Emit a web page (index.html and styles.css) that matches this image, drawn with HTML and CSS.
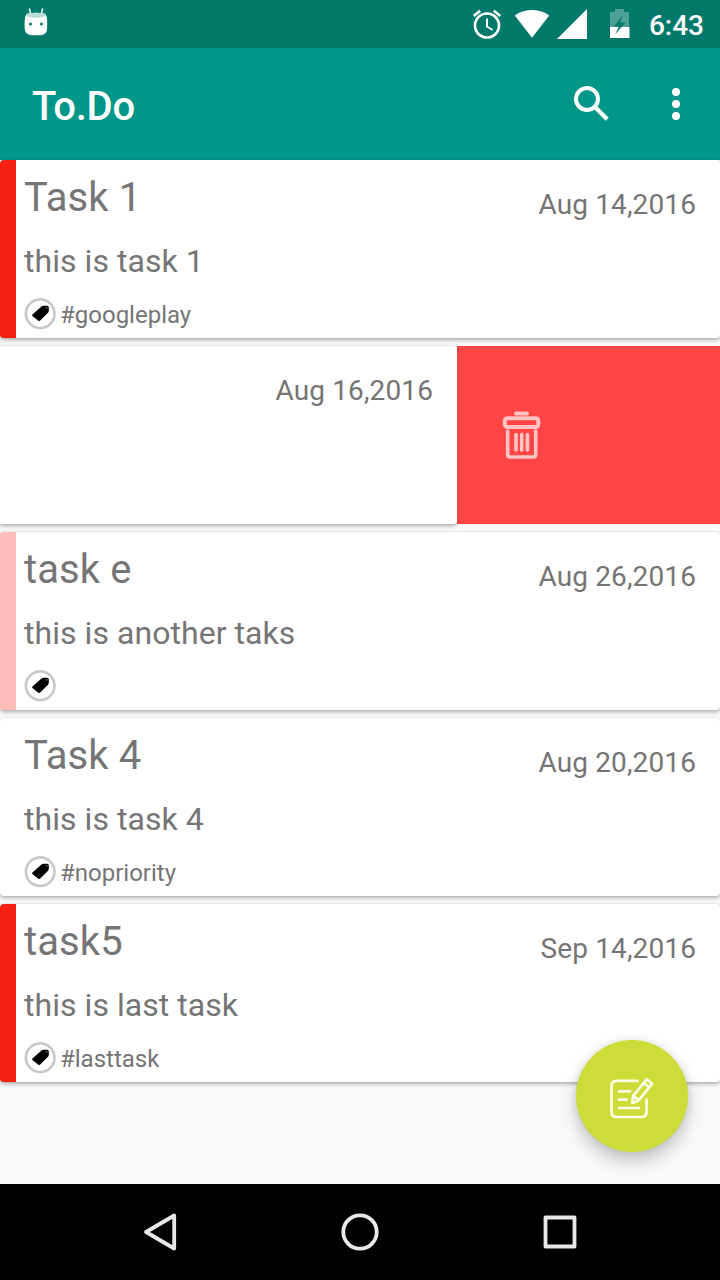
FILE: index.html
```html
<!DOCTYPE html>
<html lang="en">
<head>
<meta charset="utf-8">
<title>To.Do</title>
<link rel="stylesheet" href="styles.css">
</head>
<body>
<svg class="defs" width="0" height="0">
  <symbol id="tag" viewBox="0 0 32 32">
    <circle cx="16.200" cy="15.700" r="14.300" fill="#fff" stroke="#c8c8c8" stroke-width="2.600"/>
    <path class="tag-shape" d="M8.700 16.200 17.200 8.700Q18.200 7.700 19.500 7.700L23.300 7.700Q24.800 7.700 24.800 9.200L24.800 12.500Q24.800 14 23.800 15L16.500 22.300Q15.200 23.600 14 22.500L8.700 18.300Q7.600 17.300 8.700 16.200Z" fill="#000"/>
    <circle cx="22.800" cy="9.800" r=".9" fill="#666"/>
  </symbol>
</svg>
<div class="screen">
  <header class="status">
    <svg class="droid" width="24" height="30" viewBox="0 0 24 30">
      <path d="M5.500 1 6.700 6M18.500 1 17.300 6" stroke="#fff" stroke-width="1.400" stroke-linecap="round"/>
      <path d="M.6 17C.6 8 1.500 6 5 5.300Q12 4.300 19 5.300C22.500 6 23.200 8 23.200 17C23.200 25.500 22 27.300 12 27.300S.6 25.500 .6 17Z" fill="#fff"/>
      <path d="M2 7Q3 4.800 12 4.800T22 7Q21 9.800 12 9.800T2 7Z" fill="#b9dcd7"/>
      <circle cx="6.500" cy="16" r="1.500" fill="#00796b"/><circle cx="17.500" cy="16" r="1.500" fill="#00796b"/>
    </svg>
    <div class="indicators">
      <svg width="30" height="32" viewBox="0 0 30 32" fill="none" stroke="#fff">
        <circle cx="15" cy="17.500" r="12" stroke-width="2.600"/>
        <path d="M15 10.500V18.500L20.600 22" stroke-width="2"/>
        <path d="M1.700 8 8.200 2.800M28.300 8 21.800 2.800" stroke-width="2.600"/>
      </svg>
      <svg class="wifi" width="36" height="30" viewBox="0 0 36 30"><path d="M.8 7.500Q8 2 18 2T35.200 7.500L18 29.800Z" fill="#fff"/></svg>
      <svg class="signal" width="30" height="30" viewBox="0 0 30 30"><path d="M0 30H30V0Z" fill="#fff"/></svg>
      <svg class="battery" width="20" height="30" viewBox="0 0 20 30">
        <path d="M5 1H14V4H19V19H0V4H5Z" fill="#4da197"/>
        <path d="M0 19H19.500V30H0Z" fill="#fff"/>
        <path d="M12.500 7.500 4 18.500H9L5 26.500 15.500 14.500H10.200Z" fill="#00796b"/>
      </svg>
      <span class="clock">6:43</span>
    </div>
  </header>
  <div class="appbar">
    <h1 class="brand">To.Do</h1>
    <svg class="search" width="36" height="36" viewBox="0 0 36 36" fill="none" stroke="#fff"><circle cx="13" cy="13" r="11" stroke-width="4"/><path d="M22 22 33.200 33.200" stroke-width="4.200"/></svg>
    <svg class="more" width="8" height="32" viewBox="0 0 8 32" fill="#fff"><circle cx="4" cy="4" r="4"/><circle cx="4" cy="16" r="4"/><circle cx="4" cy="28" r="4"/></svg>
  </div>
  <main class="list">
    <article class="card high">
      <div class="body"><h2 class="title">Task 1</h2><p class="desc">this is task 1</p>
        <div class="tags"><svg width="32" height="32"><use href="#tag"/></svg><span>#googleplay</span></div></div>
      <time class="date">Aug 14,2016</time>
    </article>
    <div class="swipe">
      <article class="card swiped"><time class="date">Aug 16,2016</time></article>
      <div class="delete">
        <svg width="40" height="50" viewBox="0 0 40 50" fill="none" stroke="#ffc4c4" stroke-linecap="round" stroke-linejoin="round">
          <path d="M14 3.500H25" stroke-width="4"/>
          <rect x="2.800" y="8.200" width="33.500" height="8.800" rx="2.500" stroke-width="4"/>
          <path d="M5.700 21V44.500Q5.700 47 8.400 47H31Q33.700 47 33.700 44.500V21" stroke-width="3.600"/>
          <path d="M14 24.500V40M19.700 24.500V40M25.400 24.500V40" stroke-width="3.600"/>
        </svg>
      </div>
    </div>
    <article class="card low">
      <div class="body"><h2 class="title">task e</h2><p class="desc">this is another taks</p>
        <div class="tags"><svg width="32" height="32"><use href="#tag"/></svg></div></div>
      <time class="date">Aug 26,2016</time>
    </article>
    <article class="card">
      <div class="body"><h2 class="title">Task 4</h2><p class="desc">this is task 4</p>
        <div class="tags"><svg width="32" height="32"><use href="#tag"/></svg><span>#nopriority</span></div></div>
      <time class="date">Aug 20,2016</time>
    </article>
    <article class="card high">
      <div class="body"><h2 class="title">task5</h2><p class="desc">this is last task</p>
        <div class="tags"><svg width="32" height="32"><use href="#tag"/></svg><span>#lasttask</span></div></div>
      <time class="date">Sep 14,2016</time>
    </article>
    <button class="fab" aria-label="New task">
      <svg width="48" height="48" viewBox="0 0 48 48" fill="none" stroke="#fafce6" stroke-width="2.700" stroke-linecap="round" stroke-linejoin="round">
        <path d="M29.500 6.800H8.500Q3.500 6.800 3.500 12V38Q3.500 43 8.500 43H33.500Q38.500 43 38.500 38V25.500"/>
        <path d="M11 17.400H22M11 25.700H18.500M11 34H31"/>
        <path d="M24.200 29 25.200 21.800 38.700 5.300 44.200 9.700 30.700 26.400ZM25.200 21.800 30.700 26.400M35.700 9 41.200 13.400"/>
      </svg>
    </button>
  </main>
  <nav class="navbar">
    <svg width="36" height="40" viewBox="0 0 36 40"><path d="M4 20 32.200 3.500V36.500Z"/></svg>
    <svg width="40" height="40" viewBox="0 0 40 40"><circle cx="20" cy="20" r="16.700"/></svg>
    <svg width="36" height="40" viewBox="0 0 36 40"><rect x="3.500" y="5.500" width="29" height="29"/></svg>
  </nav>
</div>
</body>
</html>
```
FILE: styles.css
```css
* { box-sizing: border-box; }
body { margin: 0; font-family: Roboto, sans-serif; background: #fafafa; }
h1, h2, p { margin: 0; font-weight: 400; }
svg { display: block; flex: none; }
.defs { position: absolute; }
.tag-shape { filter: blur(.5px); }

.screen { width: 720px; height: 1280px; display: flex; flex-direction: column; overflow: hidden; }

.status { height: 48px; background: #00796b; display: flex; justify-content: space-between; align-items: flex-start; padding: 8px 16px 0 24px; color: #fff; }
.indicators { display: flex; align-items: flex-start; }
.wifi { margin-left: 12px; }
.signal { margin: 1px 0 0 7px; }
.battery { margin-left: 23px; }
.clock { font-size: 28px; line-height: 33px; font-weight: 500; margin-left: 19px; padding-top: 1px; }

.appbar { height: 112px; background: #009688; display: flex; align-items: center; padding: 0 40px 0 32px; color: #fff; }
.brand { flex: 1; font-size: 40px; line-height: 48px; font-weight: 500; padding-top: 6px; letter-spacing: -.3px; }
.more { margin-left: 62px; }

.list { flex: 1; position: relative; display: flex; flex-direction: column; gap: 8px; }
.card { height: 178px; display: flex; justify-content: space-between; background: #fff; border-left: 16px solid #fff; border-radius: 4px; padding: 0 24px 0 8px; color: #757575; box-shadow: 0 2px 4px rgba(0, 0, 0, .3), 0 0 2px rgba(0, 0, 0, .12); }
.high { border-left-color: #f42112; }
.low { border-left-color: #fcbcb8; }
.body { padding-top: 14px; }
.title { font-size: 40px; line-height: 48px; letter-spacing: .1px; }
.desc { font-size: 32px; line-height: 38px; margin-top: 20px; letter-spacing: .05px; }
.tags { display: flex; margin-top: 18px; gap: 4px; font-size: 24px; line-height: 34px; }
.date { font-size: 28px; line-height: 33px; padding-top: 28px; letter-spacing: .13px; }

.swipe { display: flex; height: 178px; }
.swiped { width: 457px; justify-content: flex-end; border-left: 0; border-radius: 0 4px 4px 0; }
.delete { flex: 1; background: linear-gradient(90deg, #e94040, #ff4545 4px); display: flex; align-items: center; padding-left: 45px; }
.delete svg { filter: blur(.5px); }

.fab { position: absolute; right: 32px; bottom: 32px; width: 112px; height: 112px; border: 0; border-radius: 50%; padding: 4px 0 0 0; background: #cddc39; display: flex; align-items: center; justify-content: center; box-shadow: 0 10px 18px rgba(0, 0, 0, .2), 0 0 10px rgba(0, 0, 0, .1); }

.navbar { height: 96px; background: #000; display: flex; justify-content: space-between; align-items: center; padding: 0 142px; }
.navbar svg { fill: none; stroke: #e8e8e8; stroke-width: 3.8; stroke-linejoin: round; }
```
